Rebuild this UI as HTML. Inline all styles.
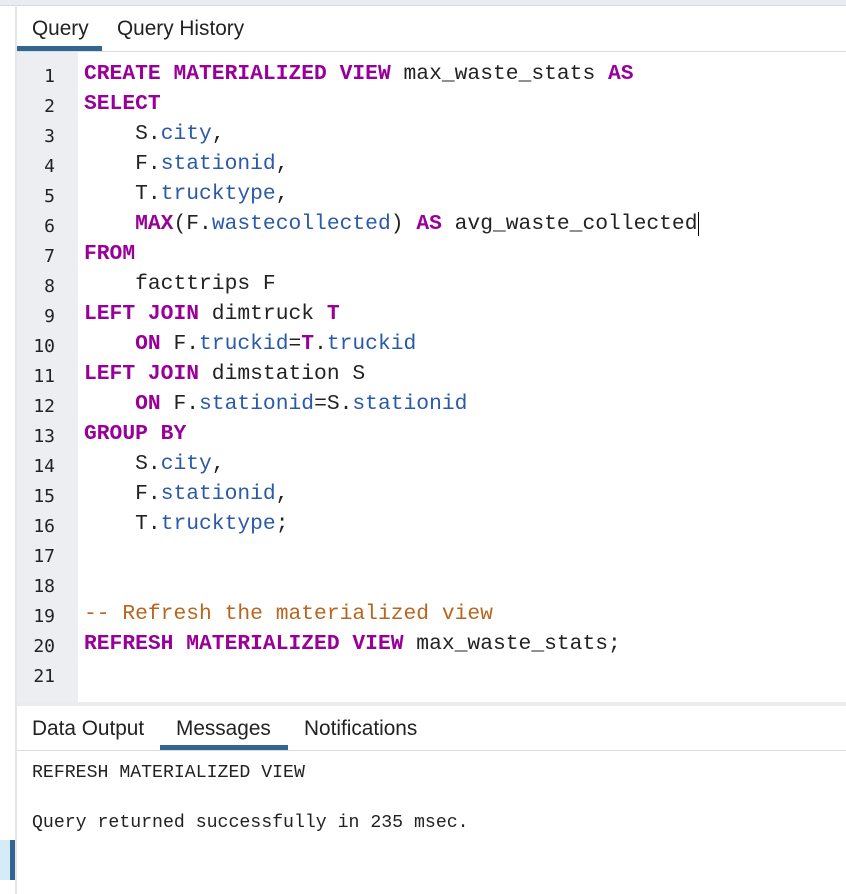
<!DOCTYPE html>
<html><head><style>
body{margin:0;width:846px;height:894px;background:#fff;position:relative;overflow:hidden;font-family:"Liberation Sans",sans-serif}
.top{position:absolute;left:0;top:0;width:846px;height:5px;background:#e9ecf1;border-bottom:1px solid #d8dbe0}
.vline{position:absolute;left:15px;top:5px;width:2px;height:889px;background:#e4e6ea}
.tabs{position:absolute;left:17px;top:6px;right:0;height:45px;border-bottom:1px solid #dcdcdc}
.tab{position:absolute;top:11px;font-size:20.8px;color:#222}
.ul{position:absolute;height:5px;background:#326690}
.gutter{position:absolute;left:17px;top:52px;width:61px;height:650px;background:#eceef2}
.code{position:absolute;left:0;top:62px;font-family:"Liberation Mono",monospace;font-size:21.3px;white-space:pre;color:#222}
.ln{position:absolute;left:17px;width:38px;text-align:right;color:#222;font-size:18px;font-family:"DejaVu Sans Mono",monospace}
.tx{position:absolute;left:84px}
.k{color:#990099;font-weight:bold}.b{color:#2a5aa8}.c{color:#b8661f}
.sep{position:absolute;left:17px;top:702px;right:0;height:4px;background:#e9ecf1}
.btabs{position:absolute;left:17px;top:706px;right:0;height:44px;border-bottom:1px solid #dcdcdc}
.msg{position:absolute;left:32px;font-family:"Liberation Mono",monospace;font-size:18.2px;color:#222;white-space:pre}
</style></head><body>
<div class="top"></div><div class="vline"></div>
<div class="tabs"><span class="tab" style="left:15px">Query</span><span class="tab" style="left:100px">Query History</span><div class="ul" style="left:0;width:85px;top:40px"></div></div>
<div class="gutter"></div>
<div class="code">
<div class="ln" style="top:4px">1</div><div class="tx" style="top:0"><span class="k">CREATE MATERIALIZED VIEW</span> max_waste_stats <span class="k">AS</span></div>
<div class="ln" style="top:34px">2</div><div class="tx" style="top:30px"><span class="k">SELECT</span></div>
<div class="ln" style="top:64px">3</div><div class="tx" style="top:60px">    S.<span class="b">city</span>,</div>
<div class="ln" style="top:94px">4</div><div class="tx" style="top:90px">    F.<span class="b">stationid</span>,</div>
<div class="ln" style="top:124px">5</div><div class="tx" style="top:120px">    T.<span class="b">trucktype</span>,</div>
<div class="ln" style="top:154px">6</div><div class="tx" style="top:150px">    <span class="k">MAX</span>(F.<span class="b">wastecollected</span>) <span class="k">AS</span> avg_waste_collected<span style="border-left:1px solid #000;margin-left:1px"></span></div>
<div class="ln" style="top:184px">7</div><div class="tx" style="top:180px"><span class="k">FROM</span></div>
<div class="ln" style="top:214px">8</div><div class="tx" style="top:210px">    facttrips F</div>
<div class="ln" style="top:244px">9</div><div class="tx" style="top:240px"><span class="k">LEFT JOIN</span> dimtruck <span class="k">T</span></div>
<div class="ln" style="top:274px">10</div><div class="tx" style="top:270px">    <span class="k">ON</span> F.<span class="b">truckid</span>=<span class="k">T</span>.<span class="b">truckid</span></div>
<div class="ln" style="top:304px">11</div><div class="tx" style="top:300px"><span class="k">LEFT JOIN</span> dimstation S</div>
<div class="ln" style="top:334px">12</div><div class="tx" style="top:330px">    <span class="k">ON</span> F.<span class="b">stationid</span>=S.<span class="b">stationid</span></div>
<div class="ln" style="top:364px">13</div><div class="tx" style="top:360px"><span class="k">GROUP BY</span></div>
<div class="ln" style="top:394px">14</div><div class="tx" style="top:390px">    S.<span class="b">city</span>,</div>
<div class="ln" style="top:424px">15</div><div class="tx" style="top:420px">    F.<span class="b">stationid</span>,</div>
<div class="ln" style="top:454px">16</div><div class="tx" style="top:450px">    T.<span class="b">trucktype</span>;</div>
<div class="ln" style="top:484px">17</div>
<div class="ln" style="top:514px">18</div>
<div class="ln" style="top:544px">19</div><div class="tx" style="top:540px"><span class="c">-- Refresh the materialized view</span></div>
<div class="ln" style="top:574px">20</div><div class="tx" style="top:570px"><span class="k">REFRESH MATERIALIZED VIEW</span> max_waste_stats;</div>
<div class="ln" style="top:604px">21</div>
</div>
<div class="sep"></div>
<div class="btabs"><span class="tab" style="left:15px">Data Output</span><span class="tab" style="left:159px">Messages</span><span class="tab" style="left:287px">Notifications</span><div class="ul" style="left:143px;width:128px;top:39px"></div></div>
<div class="msg" style="top:763px">REFRESH MATERIALIZED VIEW</div>
<div class="msg" style="top:813px">Query returned successfully in 235 msec.</div>
<div style="position:absolute;left:0;top:840px;width:10px;height:40px;background:#d6ebf8"></div>
<div style="position:absolute;left:10px;top:840px;width:5px;height:40px;background:#326690"></div>
</body></html>
